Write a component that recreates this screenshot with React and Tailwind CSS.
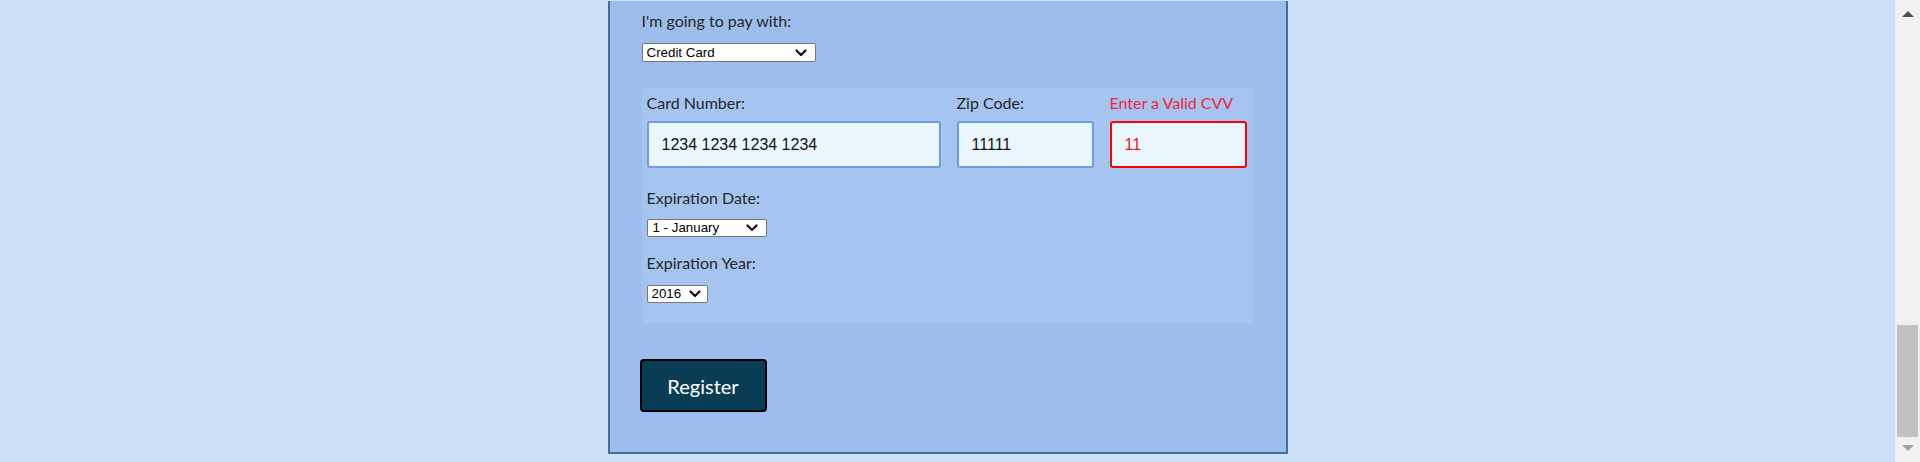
import React from "react";

const labelFont = { fontFamily: "Lato, 'Open Sans', sans-serif" };

// small fake native select: box with the value and a chevron
const Select = ({ value, width, height, padLeft, padRight, options }) => (
  <div
    className={`flex items-center border border-[#767676] bg-white rounded-[2px] ${width} ${height} ${padLeft} ${padRight}`}
  >
    <select
      className="appearance-none bg-transparent flex-1 min-w-0 text-[13.33px] leading-none text-black outline-none"
      style={{ fontFamily: "'Liberation Sans', Arial, sans-serif" }}
      defaultValue={value}
    >
      {options.map((o) => (
        <option key={o}>{o}</option>
      ))}
    </select>
    <svg width="12" height="8" viewBox="0 0 12 8" className="shrink-0">
      <polyline
        points="1.5,1.5 6,6 10.5,1.5"
        fill="none"
        stroke="#111"
        strokeWidth="2.2"
        strokeLinecap="round"
        strokeLinejoin="round"
      />
    </svg>
  </div>
);

const Field = ({ label, value, width, error }) => (
  <div className={`flex flex-col ${width}`}>
    <label
      className={`text-[16px] leading-[24px] ${error ? "text-[#f2233c]" : "text-[#262626]"}`}
      style={labelFont}
    >
      {label}
    </label>
    <input
      readOnly
      value={value}
      className={`mt-[6px] h-[47px] w-full rounded-[3px] border-2 bg-[#e9f6fd] px-[13px] text-[16px] outline-none ${
        error ? "border-[#ff0000] text-[#e8161b]" : "border-[#6d9bdb] text-[#111]"
      }`}
      style={{ fontFamily: "'Liberation Sans', Arial, sans-serif" }}
    />
  </div>
);

const App = () => {
  return (
    <div className="flex h-[462px] w-full overflow-hidden bg-[#cde0fa]">
      {/* page */}
      <div className="flex flex-1 flex-col items-center justify-end pb-[8px]">
        <div className="w-[680px] border-x-2 border-b-2 border-[#42709a] bg-[#9dbeec] px-[32px] pb-[40px] pt-[8px]">
          <p className="text-[16px] leading-[24px] text-[#262626]" style={labelFont}>
            I'm going to pay with:
          </p>
          <div className="mt-[10px]">
            <Select
              value="Credit Card"
              width="w-[174px]"
              height="h-[19px]"
              padLeft="pl-[4px]"
              padRight="pr-[8px]"
              options={["Credit Card", "PayPal", "Bitcoin"]}
            />
          </div>

          {/* credit card details */}
          <div className="mt-[26px] rounded-[3px] bg-[#a5c5f0] pl-[5px] pr-[7px] pt-[3px] pb-[20px]">
            <div className="flex gap-[16px]">
              <Field label="Card Number:" value="1234 1234 1234 1234" width="w-[294px]" />
              <Field label="Zip Code:" value="11111" width="w-[137px]" />
              <Field label="Enter a Valid CVV" value="11" width="w-[137px]" error />
            </div>

            <p className="mt-[18px] text-[16px] leading-[24px] text-[#262626]" style={labelFont}>
              Expiration Date:
            </p>
            <div className="mt-[9px]">
              <Select
                value="1 - January"
                width="w-[120px]"
                height="h-[18px]"
                padLeft="pl-[5px]"
                padRight="pr-[8px]"
                options={[
                  "1 - January",
                  "2 - February",
                  "3 - March",
                  "4 - April",
                  "5 - May",
                  "6 - June",
                  "7 - July",
                  "8 - August",
                  "9 - September",
                  "10 - October",
                  "11 - November",
                  "12 - December",
                ]}
              />
            </div>

            <p className="mt-[14px] text-[16px] leading-[24px] text-[#262626]" style={labelFont}>
              Expiration Year:
            </p>
            <div className="mt-[10px]">
              <Select
                value="2016"
                width="w-[61px]"
                height="h-[18px]"
                padLeft="pl-[4px]"
                padRight="pr-[6px]"
                options={["2016", "2017", "2018", "2019", "2020"]}
              />
            </div>
          </div>

          <button
            className="mt-[36px] -ml-[2px] h-[53px] w-[127px] rounded-[4px] border-2 border-black bg-[#083d55] text-[20px] text-white"
            style={labelFont}
          >
            Register
          </button>
        </div>
      </div>

      {/* scrollbar */}
      <div className="flex w-[25px] flex-col items-center bg-[#f1f1f1]">
        <svg width="12" height="7" viewBox="0 0 12 7" className="mt-[10px]">
          <polygon points="0,7 6,1 12,7" fill="#505050" />
        </svg>
        <div className="flex-1" />
        <div className="mb-[8px] h-[112px] w-[21px] bg-[#c1c1c1]" />
        <svg width="12" height="7" viewBox="0 0 12 7" className="mb-[10px]">
          <polygon points="0,0 12,0 6,6" fill="#a3a3a3" />
        </svg>
      </div>
    </div>
  );
};

export default App;
